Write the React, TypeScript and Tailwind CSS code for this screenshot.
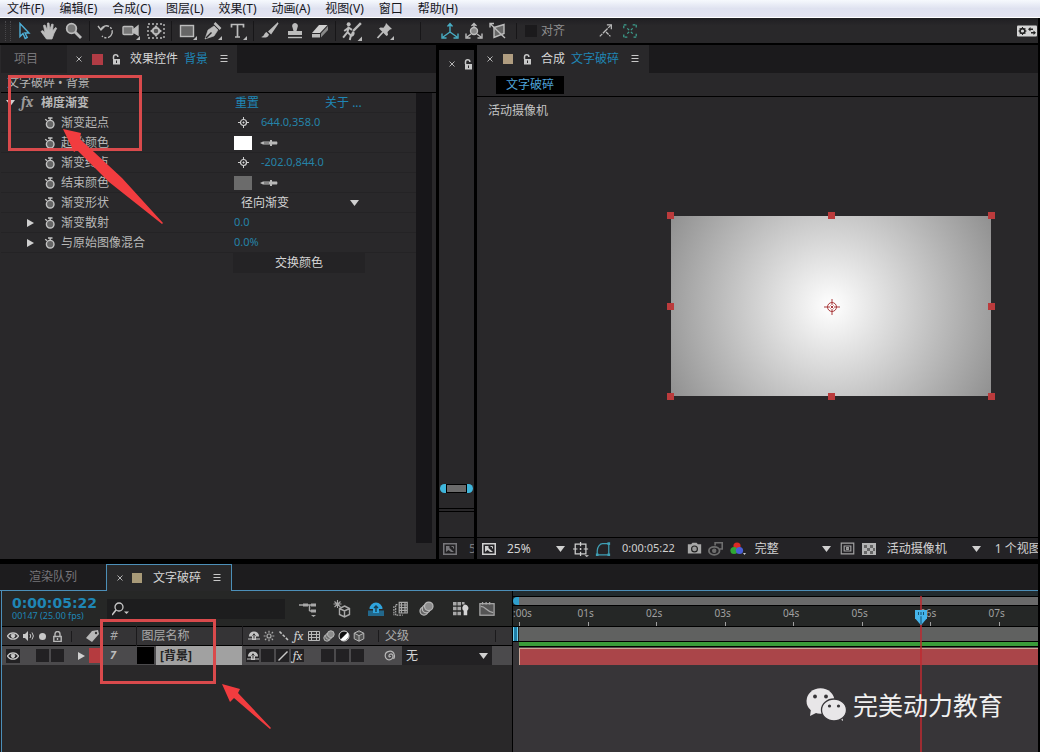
import React from 'react';
import clsx from 'clsx';

interface IconProps {
  children: React.ReactNode;
  size?: number;
  className?: string;
}

/** Stroke icon drawn on an 18x18 grid */
const Icon: React.FC<IconProps> = ({ children, size = 18, className }) => (
  <svg
    width={size}
    height={size}
    viewBox="0 0 18 18"
    fill="none"
    stroke="currentColor"
    strokeWidth={1.4}
    className={clsx('shrink-0', className)}
    aria-hidden="true"
  >
    {children}
  </svg>
);

const Corner = () => <path d="M18 14v4h-4z" fill="currentColor" stroke="none" />;

const LockIcon = () => (
  <svg width="9" height="11" viewBox="0 0 9 11" fill="none" stroke="#c8c8c8" className="shrink-0" aria-hidden="true">
    <path d="M1.500 5V3a2.200 2.200 0 0 1 4.400 0" strokeWidth="1.500" />
    <rect x="1" y="5" width="7" height="5.500" fill="#c8c8c8" stroke="none" />
    <path d="M4.500 6.500v2.500" stroke="#2a292b" />
  </svg>
);

const MenuLines = () => (
  <svg width="8" height="8" viewBox="0 0 8 8" stroke="#c8c8c8" className="shrink-0" aria-hidden="true">
    <path d="M.5.5h7M.5 3.500h7M.5 6.500h7" />
  </svg>
);

const CloseIcon = () => (
  <svg width="6" height="6" viewBox="0 0 6 6" stroke="#b4b4b4" className="shrink-0" aria-hidden="true">
    <path d="M.5.5l5 5M5.500.5l-5 5" />
  </svg>
);

const Stopwatch = () => (
  <svg width="12" height="12" viewBox="0 0 12 12" fill="none" stroke="#c4c4c4" className="shrink-0" aria-hidden="true">
    <circle cx="6.200" cy="7.200" r="3.800" fill="#666" strokeWidth="1.400" />
    <path d="M4 1h4.500M6.200 1v2.400M1.200 2.300l2 1.500" strokeWidth="1.400" />
  </svg>
);

const Triangle: React.FC<{ down?: boolean; className?: string }> = ({ down, className }) => (
  <svg width="9" height="8" viewBox="0 0 9 8" fill="#d0d0d0" className={clsx('shrink-0', className)} aria-hidden="true">
    <path d={down ? 'M0 1h9L4.500 7z' : 'M1 0v8l7-4z'} />
  </svg>
);

const Crosshair = () => (
  <svg width="11" height="11" viewBox="0 0 11 11" fill="none" stroke="#d0d0d0" className="shrink-0" aria-hidden="true">
    <circle cx="5.500" cy="5.500" r="3" strokeWidth="1.200" />
    <path d="M5.500 0v2.500M5.500 8.500v2.500M0 5.500h2.500M8.500 5.500H11M4.500 5.500h2M5.500 4.500v2" />
  </svg>
);

const Eyedropper = () => (
  <svg width="18" height="8" viewBox="0 0 18 8" className="shrink-0" aria-hidden="true">
    <path d="M0 4l3-1.500h7V1h2v1.500h5q1 1.500 0 3h-5V7h-2V5.500H3z" fill="#b8b8b8" />
    <path d="M4 4h5" stroke="#555" />
  </svg>
);

const EyeIcon = () => (
  <svg width="12" height="10" viewBox="0 0 12 10" fill="none" stroke="#c8c8c8" className="shrink-0" aria-hidden="true">
    <path d="M.5 5C3 .8 9 .8 11.500 5 9 9.200 3 9.200.5 5z" strokeWidth="1.300" />
    <circle cx="6" cy="4.800" r="1.800" fill="#c8c8c8" />
  </svg>
);

const ShyIcon = () => (
  <svg width="12" height="12" viewBox="0 0 12 12" aria-hidden="true">
    <path d="M1 6a5 4.500 0 0 1 10 0v.5H8V10H4V6.500H1z" fill="#c4c4c4" />
    <path d="M0 9h4M8 9h4" stroke="#c4c4c4" />
    <path d="M6 3.500v5M4.500 5.500L6 4l1.500 1.500" stroke="#333" fill="none" />
  </svg>
);

const SlashIcon = () => (
  <svg width="12" height="12" viewBox="0 0 12 12" aria-hidden="true">
    <path d="M1.500 10.500l9-9" stroke="#c8c8c8" strokeWidth="1.500" />
  </svg>
);

const FxText = () => <i className="font-serif text-[13px] leading-3 font-normal text-[#d0d0d0]">fx</i>;

const FilmIcon = () => (
  <svg width="12" height="12" viewBox="0 0 12 12" fill="none" stroke="#b8b8b8" aria-hidden="true">
    <path d="M.5 1.500h11v9H.5zM3.500 1v10M8.500 1v10M.5 4.500h11M.5 7.500h11" />
  </svg>
);

const BlurIcon: React.FC<{ size?: number }> = ({ size = 12 }) => (
  <svg width={size} height={size} viewBox="0 0 12 12" fill="#666" stroke="#b8b8b8" aria-hidden="true">
    <circle cx="4" cy="8" r="3.200" />
    <circle cx="5.800" cy="6.200" r="3.200" />
    <circle cx="7.800" cy="4.200" r="3.400" fill="#8c8c8c" />
  </svg>
);

const CubeIcon = () => (
  <svg width="12" height="12" viewBox="0 0 12 12" fill="#555" stroke="#b8b8b8" aria-hidden="true">
    <path d="M6 .8l4.800 2.400v5.600L6 11.200 1.200 8.800V3.200zM1.200 3.200L6 5.600l4.800-2.400M6 5.600v5.600" />
  </svg>
);

const AdjustIcon = () => (
  <svg width="12" height="12" viewBox="0 0 12 12" aria-hidden="true">
    <circle cx="6" cy="6" r="5" fill="#111" stroke="#ddd" />
    <path d="M9.500 2.500a5 5 0 0 1-7 7z" fill="#fff" />
  </svg>
);

const ViewerIcon = () => (
  <svg width="14" height="12" viewBox="0 0 14 12" fill="none" stroke="currentColor" className="shrink-0" aria-hidden="true">
    <rect x=".75" y=".75" width="12.500" height="10.500" strokeWidth="1.500" />
    <path d="M3 3h3.500v2l4.500 4H8L5.500 7 3 9z" fill="currentColor" stroke="none" />
    <path d="M8.500 3.500h2v2" />
  </svg>
);

const DropDown: React.FC<{ label: string; value: string; className?: string }> = ({ label, value, className }) => (
  <span className={clsx('relative flex items-center', className)}>
    <select aria-label={label} className="h-full w-full appearance-none bg-transparent text-[#d4d4d4] outline-none">
      <option>{value}</option>
    </select>
    <Triangle down className="pointer-events-none absolute right-0" />
  </span>
);

const menus = ['文件(F)', '编辑(E)', '合成(C)', '图层(L)', '效果(T)', '动画(A)', '视图(V)', '窗口', '帮助(H)'];

const MenuBar = () => (
  <nav className="flex h-[18px] shrink-0 items-center gap-[15px] border-b border-white bg-gradient-to-b from-[#f6f9fd] via-[#dfe2f0] to-[#e3e3f0] px-[7px]">
    {menus.map((menu) => (
      <button key={menu} className="text-xs leading-4 whitespace-nowrap text-[#16161c]">
        {menu}
      </button>
    ))}
  </nav>
);

const toolGroups: { name: string; icon: React.ReactNode }[][] = [
  [
    {
      name: '选取',
      icon: (
        <Icon className="text-[#4fb0d8]">
          <path d="M5 1.500v13l3-3 2.200 5 2-1-2.200-4.500h4z" />
        </Icon>
      ),
    },
    {
      name: '手形',
      icon: (
        <Icon>
          <path
            d="M6.500 17L1 9.500l1.500-1L5 10.500 3.500 3.500 5 3l2.200 5L7.500 1H9l.8 7 2-6 1.400.4L12.500 9l3-3.500 1.200.8L14 11.500 12 17z"
            fill="currentColor"
            strokeWidth=".8"
          />
        </Icon>
      ),
    },
    {
      name: '缩放',
      icon: (
        <Icon>
          <circle cx="6.500" cy="6.500" r="4.800" fill="#777" strokeWidth="1.800" />
          <path d="M10 10l6 6" strokeWidth="2.800" />
        </Icon>
      ),
    },
  ],
  [
    {
      name: '旋转',
      icon: (
        <Icon>
          <path d="M4 7a6 6 0 1 1 1 7" strokeDasharray="9 1.500 2 1.500" />
          <path d="M1 4l3 4 3.500-3.500" />
        </Icon>
      ),
    },
    {
      name: '摄像机',
      icon: (
        <Icon>
          <rect x="1" y="4.500" width="10" height="8" rx="1" fill="#777" />
          <path d="M11 8l5-4v9l-5-3z" fill="currentColor" />
          <Corner />
        </Icon>
      ),
    },
    {
      name: '锚点',
      icon: (
        <Icon>
          <rect x="1" y="2" width="16" height="14" strokeDasharray="2 2" />
          <circle cx="9" cy="9" r="3.200" fill="#555" strokeWidth="1.800" />
          <path d="M9 3l2 2.500H7zM9 15l2-2.500H7zM3 9l2.500-2v4zM15 9l-2.500-2v4z" fill="currentColor" stroke="none" />
        </Icon>
      ),
    },
  ],
  [
    {
      name: '矩形',
      icon: (
        <Icon>
          <rect x="1.500" y="3.500" width="13" height="11" fill="#666" />
          <Corner />
        </Icon>
      ),
    },
    {
      name: '钢笔',
      icon: (
        <Icon>
          <path d="M1 17l3-9 6-4 4 4-4 6z" fill="currentColor" strokeWidth=".6" />
          <path d="M10.500 1l6 6" strokeWidth="2.500" />
          <path d="M2 16l5.500-5.500" stroke="#262527" />
          <Corner />
        </Icon>
      ),
    },
    {
      name: '文字',
      icon: (
        <Icon>
          <path d="M2.500 5.500V2.500h12v3M8.500 2.500v12M6 15h5" strokeWidth="1.700" />
          <Corner />
        </Icon>
      ),
    },
  ],
  [
    {
      name: '画笔',
      icon: (
        <Icon>
          <path d="M17 1L8 9.500l2 2z" fill="currentColor" />
          <path d="M0 15c3 0 3-4 5.500-5L8 12.500C7 16 3 16 0 15z" fill="currentColor" stroke="none" />
        </Icon>
      ),
    },
    {
      name: '仿制图章',
      icon: (
        <Icon>
          <path
            d="M9 1a3 3 0 0 1 2.500 4.500L10.500 9H16v4H2V9h5.500L6.500 5.500A3 3 0 0 1 9 1z"
            fill="currentColor"
            stroke="none"
          />
          <path d="M2 15.500h14" />
        </Icon>
      ),
    },
    {
      name: '橡皮擦',
      icon: (
        <Icon>
          <path d="M1 11l7-8h8.500l-7.500 8z" fill="#d0d0d0" stroke="none" />
          <path d="M1 12h8v3.500H1z" fill="#bbb" stroke="none" />
          <path d="M10 11.500l7-7.500v4l-7 7.500z" fill="#888" stroke="none" />
        </Icon>
      ),
    },
  ],
  [
    {
      name: 'Roto 笔刷',
      icon: (
        <Icon size={20}>
          <circle cx="6" cy="3" r="1.800" fill="currentColor" stroke="none" />
          <path d="M6 5l-1 5-4 5M5 10l3 3-1 4M2 9l4-3 3 2" strokeWidth="1.800" />
          <path d="M17 2l-7 7" strokeWidth="2.200" />
          <path d="M7 14c1 0 1-4 3-5l1.500 1.500C11 14 9 14.500 7 14z" fill="currentColor" stroke="none" />
          <Corner />
        </Icon>
      ),
    },
    {
      name: '操控点',
      icon: (
        <Icon className="ml-3">
          <path
            d="M10 1l6 6-2 .5-2.500 2.500.5 3-1.500 1L3 6.500 4.500 5.500l3 .3L9.500 3z"
            fill="currentColor"
            stroke="none"
          />
          <path d="M7 10l-5.500 6" strokeWidth="1.800" />
          <Corner />
        </Icon>
      ),
    },
  ],
];

const ToolBar = () => (
  <div className="flex h-[25px] shrink-0 items-center bg-gradient-to-b from-[#1f1e22] to-[#29282a] to-30% text-[#bcbcbc]">
    <span className="ml-[5px] h-5 w-[6px] border-x border-dotted border-[#48474a]" />
    {toolGroups.map((group, index) => (
      <div key={index} className="flex items-center">
        {index > 0 && <span className="mx-[3px] h-5 w-px bg-[#171618]" />}
        {group.map((tool) => (
          <button key={tool.name} aria-label={tool.name} className="flex min-w-[25px] items-center justify-center">
            {tool.icon}
          </button>
        ))}
      </div>
    ))}
    <div className="ml-[26px] flex items-center gap-[6px] border-l border-[#171618] pl-[20px]">
      <button aria-label="本地轴模式">
        <Icon className="text-[#48adc4]">
          <path d="M9 2v8L2 15M9 10l7 5M6.500 4.500L9 1.500l2.500 3M1 11.500V16h4.500M17 11.500V16h-4.500" />
        </Icon>
      </button>
      <button aria-label="世界轴模式">
        <Icon>
          <circle cx="9" cy="9" r="3.500" fill="#888" />
          <path d="M9 2v4M6.500 4L9 1.500 11.500 4M6 12l-4 3M12 12l4 3M1 11.500V16h4.500M17 11.500V16h-4.500" />
        </Icon>
      </button>
      <button aria-label="视图轴模式">
        <Icon>
          <path d="M5 5.500l10-3v9l-10 4z" fill="#666" />
          <path d="M1.500 2L16 16M1 5.500V1.500h4" />
        </Icon>
      </button>
    </div>
    <label className="ml-[9px] flex items-center gap-1 border-l border-[#171618] pl-2 text-xs text-[#8e8e8e]">
      <input type="checkbox" className="size-3 appearance-none bg-[#1b1a1c]" />
      对齐
    </label>
    <button aria-label="对齐边缘" className="ml-[33px]">
      <Icon size={16}>
        <path d="M2 15l6-6 6 6M8 9l7-7" strokeDasharray="4 1" />
        <path d="M10 2h5v5" />
      </Icon>
    </button>
    <button aria-label="对齐特征" className="ml-2 text-[#3d9f8e]">
      <Icon size={16}>
        <path d="M2 6V2h4M12 2h4v4M16 12v4h-4M6 16H2v-4M6 6l2 2M12 6l-2 2M6 12l2-2M12 12l-2-2" strokeDasharray="3 1" />
      </Icon>
    </button>
    <button aria-label="同步设置" className="ml-auto">
      <svg width="21" height="12" viewBox="0 0 21 12" aria-hidden="true">
        <rect width="20" height="11" y=".5" rx="1" fill="#d6d6d6" />
        <circle cx="5.500" cy="6" r="2.400" fill="none" stroke="#222" strokeWidth="1.600" />
        <path d="M5.500 2v2M5.500 8v2M1.500 6h2M7.500 6h2M2.700 3.200l1.300 1.300M7 7.500l1.300 1.300M8.300 3.200L7 4.500M4 7.500L2.700 8.800" stroke="#222" />
        <path d="M13.500 2L11 4.200l2.500 2.200V5H16V3.500h-2.500zM16.500 5.500V7H14v1.500h2.500V10L19 7.700z" fill="#222" />
      </svg>
    </button>
  </div>
);

interface EffectRow {
  name: string;
  expandable?: boolean;
  value: React.ReactNode;
}

const effectRows: EffectRow[] = [
  {
    name: '渐变起点',
    value: (
      <>
        <Crosshair />
        <button className="ml-3">644.0,358.0</button>
      </>
    ),
  },
  {
    name: '起始颜色',
    value: (
      <>
        <button aria-label="起始颜色" className="-ml-1 mr-2 h-[14px] w-[18px] bg-white" />
        <Eyedropper />
      </>
    ),
  },
  {
    name: '渐变终点',
    value: (
      <>
        <Crosshair />
        <button className="ml-3">-202.0,844.0</button>
      </>
    ),
  },
  {
    name: '结束颜色',
    value: (
      <>
        <button aria-label="结束颜色" className="-ml-1 mr-2 h-[14px] w-[18px] bg-[#6b6b6b]" />
        <Eyedropper />
      </>
    ),
  },
  { name: '渐变形状', value: <DropDown label="渐变形状" value="径向渐变" className="h-5 w-[121px] pl-[3px] text-xs" /> },
  { name: '渐变散射', expandable: true, value: <button className="-ml-1">0.0</button> },
  { name: '与原始图像混合', expandable: true, value: <button className="-ml-1">0.0%</button> },
];

const EffectControls = () => (
  <section className="flex w-[42%] shrink-0 flex-col bg-[#29282a] pl-px">
    <div className="flex h-7 shrink-0 bg-[#1b1a1c] text-xs">
      <button className="w-[66px] bg-[#222123] pr-4 text-center text-[#77767a]">项目</button>
      <div className="flex items-center bg-[#29282a] px-[9px] text-[#d6d6d6]">
        <CloseIcon />
        <span className="ml-[10px] size-[11px] bg-[#b13c45]" />
        <span className="mr-[9px] ml-[9px]">
          <LockIcon />
        </span>
        效果控件<span className="mr-3 ml-[6px] text-[#1f86b5]">背景</span>
        <MenuLines />
      </div>
    </div>
    <div className="flex h-5 shrink-0 items-center border-b border-black px-[6px] text-xs text-[#b4b4b4]">文字破碎 • 背景</div>
    <div className="flex flex-1">
      <div className="flex-1">
        <div className="flex h-5 items-center border-b border-[#242325] pl-[5px] text-xs">
          <Triangle down />
          <i className="ml-[6px] w-5 font-serif text-[15px] font-bold text-[#9b9b9b]">fx</i>
          <span className="w-[194px] font-bold text-[#b8b8b8]">梯度渐变</span>
          <button className="text-[#1f86b5]">重置</button>
          <button className="ml-[66px] text-[#1f86b5]">关于 ...</button>
        </div>
        {effectRows.map((row) => (
          <div key={row.name} className="flex h-5 items-center border-b border-[#242325]">
            <div className="flex w-[237px] items-center pl-[25px] text-xs text-[#b8b8b8]">
              <span className="w-[18px]">{row.expandable && <Triangle />}</span>
              <Stopwatch />
              <span className="ml-[5px]">{row.name}</span>
            </div>
            <div className="flex items-center text-[11px] text-[#2583a8]">{row.value}</div>
          </div>
        ))}
        <button className="ml-[232px] block h-5 w-[132px] bg-[#242325] text-xs text-[#d4d4d4]">交换颜色</button>
      </div>
      <div className="mr-1 mb-4 w-4 bg-[#171619]" />
    </div>
  </section>
);

const SidePanel = () => (
  <section className="mt-[5px] flex w-[35px] shrink-0 flex-col overflow-hidden bg-[#29282a]">
    <div className="flex h-7 shrink-0 items-center gap-[9px] pl-[10px]">
      <CloseIcon />
      <LockIcon />
    </div>
    <div className="mt-auto flex h-[10px] items-center px-px">
      <span className="h-[9px] w-[6px] rounded-l-full bg-[#3fb6dc]" />
      <span className="h-[9px] flex-1 border border-black bg-[#6b6b6b]" />
      <span className="h-[9px] w-[6px] rounded-r-full bg-[#3fb6dc]" />
    </div>
    <div className="mt-[15px] h-1 shrink-0 border-y border-black" />
    <div className="mt-[25px] flex h-[22px] shrink-0 items-center gap-3 border-t border-black bg-[#222123] pl-1 text-xs text-[#77767a]">
      <ViewerIcon />5
    </div>
  </section>
);

const handlePositions = [
  '-left-1 -top-1',
  'left-1/2 -ml-[3px] -top-1',
  '-right-1 -top-1',
  '-left-1 top-1/2 -mt-[3px]',
  '-right-1 top-1/2 -mt-[3px]',
  '-left-1 -bottom-1',
  'left-1/2 -ml-[3px] -bottom-1',
  '-right-1 -bottom-1',
];

const CompositionViewer = () => (
  <section className="flex min-w-0 flex-1 flex-col overflow-hidden bg-[#29282a]">
    <div className="flex h-7 shrink-0 bg-[#1b1a1c] text-xs">
      <div className="flex items-center bg-[#29282a] px-[10px] text-[#d6d6d6]">
        <CloseIcon />
        <span className="ml-[10px] size-[10px] bg-[#b09d80]" />
        <span className="mr-[9px] ml-[10px]">
          <LockIcon />
        </span>
        合成<span className="mr-3 ml-[6px] text-[#1f86b5]">文字破碎</span>
        <MenuLines />
      </div>
    </div>
    <div className="flex h-6 shrink-0 items-center border-b border-black pl-[19px]">
      <button className="h-[18px] bg-black px-[10px] text-xs text-[#4fa3d8]">文字破碎</button>
    </div>
    <div className="flex min-h-0 flex-1 flex-col">
      <p className="px-[11px] pt-[6px] text-xs leading-4 text-[#c4c4c4]">活动摄像机</p>
      <div className="flex justify-end pt-[97px] pr-[47px]">
        <div className="relative h-[180px] w-[320px] bg-[radial-gradient(circle_244px_at_50%_50%,#ffffff,#6b6b6b)]">
          {handlePositions.map((position) => (
            <span key={position} className={clsx('absolute size-[7px] bg-[#bb3b3c]', position)} />
          ))}
          <svg
            width="16"
            height="16"
            viewBox="0 0 16 16"
            fill="none"
            stroke="#a8383a"
            className="absolute top-1/2 left-1/2 -mt-[7px] -ml-[7px]"
            aria-hidden="true"
          >
            <circle cx="8" cy="8" r="4.500" />
            <path d="M8 0v6M8 10v6M0 8h6M10 8h6M6.500 6.500l3 3M9.500 6.500l-3 3" />
          </svg>
        </div>
      </div>
    </div>
    <div className="flex h-[22px] shrink-0 items-center border-t border-black bg-[#242326] pl-[5px] text-xs whitespace-nowrap text-[#d0d0d0]">
      <ViewerIcon />
      <DropDown label="放大率" value="25%" className="ml-[11px] w-[58px] shrink-0" />
      <button aria-label="网格和参考线" className="ml-2">
        <Icon size={16}>
          <rect x="2.500" y="3.500" width="12" height="11" />
          <path d="M8.500 1v5M8.500 12v5M0 9h5M12 9h5M8.500 8v2M7.500 9h2" />
          <path d="M13 16h5l-2.500 2z" fill="currentColor" stroke="none" />
        </Icon>
      </button>
      <button aria-label="蒙版可见性" className="ml-[6px] text-[#3f9fb5]">
        <Icon size={16}>
          <path d="M2.500 15.500V11c0-4 3-8 6-8h7v12.500z" />
          <path d="M1 14h3v3H1zM14 14h3v3h-3zM14 1.500h3v3h-3z" fill="currentColor" stroke="none" />
        </Icon>
      </button>
      <button className="ml-[11px] text-[11px]">0:00:05:22</button>
      <button aria-label="拍摄快照" className="ml-3 text-[#a8a8a8]">
        <Icon size={15}>
          <path d="M1 4h4l1.500-2h5L13 4h4v11H1z" fill="currentColor" stroke="none" />
          <circle cx="9" cy="9.500" r="3.500" fill="#999" stroke="#222" />
        </Icon>
      </button>
      <button aria-label="显示快照" className="ml-[6px] text-[#6e6e6e]">
        <Icon size={16}>
          <ellipse cx="7" cy="11" rx="6" ry="4.500" strokeWidth="2" />
          <circle cx="7" cy="11" r="1.800" fill="currentColor" />
          <path d="M8 5V2h8v7h-3" strokeWidth="1.800" />
        </Icon>
      </button>
      <button aria-label="通道" className="ml-[6px]">
        <svg width="16" height="14" viewBox="0 0 16 14" aria-hidden="true">
          <circle cx="7" cy="4" r="3.600" fill="#dc2a25" />
          <circle cx="4" cy="8.500" r="3.600" fill="#2fa836" />
          <circle cx="9.500" cy="8.500" r="3.600" fill="#4a5fd8" />
          <path d="M13 11h3l-1.500 2z" fill="#ccc" />
        </svg>
      </button>
      <DropDown label="分辨率" value="完整" className="ml-[9px] w-[76px] shrink-0" />
      <button aria-label="目标区域" className="ml-[9px] text-[#a4a4a4]">
        <Icon size={15}>
          <path d="M1.500 2.500h15v13h-15zM5 6h8v6H5zM8 8h2v2H8z" />
        </Icon>
      </button>
      <button aria-label="透明网格" className="ml-[7px]">
        <svg width="14" height="12" viewBox="0 0 14 12" aria-hidden="true">
          <path d="M0 0h14v12H0z" fill="#b4b4b4" />
          <path d="M2 2h3v3H2zM8 2h3v3H8zM5 5h3v3H5zM11 5h2v3h-2zM2 8h3v3H2zM8 8h3v3H8z" fill="#666" />
        </svg>
      </button>
      <DropDown label="3D 视图" value="活动摄像机" className="ml-[11px] w-[94px] shrink-0" />
      <button className="ml-[14px]">1 个视图</button>
    </div>
  </section>
);

const switchHeads = [
  <ShyIcon />,
  <Icon size={12}>
    <circle cx="9" cy="9" r="3" strokeWidth="1.800" />
    <path d="M9 1v3M9 14v3M1 9h3M14 9h3M3 3l2 2M13 13l2 2M15 3l-2 2M3 15l2-2" strokeWidth="1.800" />
  </Icon>,
  <svg width="12" height="12" viewBox="0 0 12 12" aria-hidden="true">
    <path d="M1.500 1.500l9 9" stroke="#c4c4c4" strokeWidth="1.500" strokeDasharray="3 1.500" />
  </svg>,
  <FxText />,
  <FilmIcon />,
  <BlurIcon />,
  <AdjustIcon />,
  <CubeIcon />,
];

const layerSwitches: (React.ReactNode | null)[] = [
  <ShyIcon />,
  <span />,
  <SlashIcon />,
  <FxText />,
  null,
  <span />,
  <span />,
  <span />,
];

const LayerTable = () => (
  <table className="w-full table-fixed border-collapse text-xs">
    <colgroup>
      <col className="w-[70px]" />
      <col className="w-[31px]" />
      <col className="w-[33px]" />
      <col className="w-[106px]" />
      <col className="w-[137px]" />
      <col />
    </colgroup>
    <thead>
      <tr className="h-[19px] border-y border-black bg-[#353436] text-left text-[#aaa]">
        <th className="p-0">
          <div className="flex items-center gap-1 border-r border-[#1b1a1c] pl-[5px]">
            <EyeIcon />
            <svg width="12" height="10" viewBox="0 0 12 10" fill="#c8c8c8" stroke="#c8c8c8" aria-hidden="true">
              <path d="M0 3h2l3-3v10L2 7H0z" stroke="none" />
              <path d="M7 3q1.500 2 0 4M9 1.500q2.800 3.500 0 7" fill="none" />
            </svg>
            <span className="size-[7px] rounded-full bg-[#c8c8c8]" />
            <svg width="9" height="11" viewBox="0 0 9 11" fill="none" stroke="#b8b8b8" className="ml-[3px]" aria-hidden="true">
              <path d="M2 5V3a2.500 2.500 0 0 1 5 0v2" strokeWidth="1.400" />
              <path d="M.8 5.500h7.400v5H.8zM4.500 7v2" strokeWidth="1.400" />
            </svg>
          </div>
        </th>
        <th className="p-0">
          <svg width="13" height="12" viewBox="0 0 13 12" className="ml-[14px]" aria-hidden="true">
            <path d="M0 8l6-7 6-1 1 4-7 8z" fill="#b8b8b8" />
            <circle cx="10" cy="3" r="1.200" fill="#333" />
          </svg>
        </th>
        <th className="p-0 pl-[7px] leading-4 font-normal italic">#</th>
        <th className="border-x border-[#1b1a1c] p-0 pl-[5px] leading-4 font-normal">图层名称</th>
        <th className="p-0">
          <div className="flex gap-[3px] border-r border-[#1b1a1c] pl-[5px]">
            {switchHeads.map((head, index) => (
              <span key={index} className="flex size-3 items-center justify-center">
                {head}
              </span>
            ))}
          </div>
        </th>
        <th className="p-0 font-normal">
          <div className="mr-4 border-r border-[#1b1a1c] pl-[6px] leading-3">父级</div>
        </th>
      </tr>
    </thead>
    <tbody>
      <tr className="h-[19px] bg-[#4b4a4c]">
        <td className="p-0">
          <div className="flex items-center gap-[2px] pl-1">
            <button aria-label="可见" className="mr-[14px] flex size-[14px] items-center justify-center bg-[#222123]">
              <EyeIcon />
            </button>
            <button aria-label="独奏" className="size-[13px] bg-[#222123]" />
            <button aria-label="锁定" className="size-[13px] bg-[#222123]" />
          </div>
        </td>
        <td className="p-0">
          <div className="flex items-center justify-end gap-[3px]">
            <Triangle />
            <span className="h-[15px] w-[14px] bg-[#b53b3f]" />
          </div>
        </td>
        <td className="p-0 pl-[7px] text-[11px] font-bold text-[#bcbcbc] italic">7</td>
        <td className="p-0">
          <div className="flex h-[19px] gap-[2px] pl-px">
            <span className="h-[17px] w-[17px] self-center bg-black" />
            <span className="flex flex-1 items-center bg-[#a1a1a1] pl-1 font-bold text-[#222]">[背景]</span>
          </div>
        </td>
        <td className="p-0">
          <div className="flex gap-[2px] pl-1">
            {layerSwitches.map((item, index) =>
              item ? (
                <button
                  key={index}
                  aria-label={`开关 ${index + 1}`}
                  className="flex size-[13px] items-center justify-center bg-[#222123]"
                >
                  {item}
                </button>
              ) : (
                <span key={index} className="size-[13px]" />
              ),
            )}
          </div>
        </td>
        <td className="p-0">
          <div className="flex items-center gap-[6px] pl-[5px]">
            <svg width="12" height="12" viewBox="0 0 12 12" fill="none" stroke="#b8b8b8" strokeWidth="1.200" aria-hidden="true">
              <path d="M6.500 6a.8.8 0 0 1-1.500.4A2 2 0 0 1 8.300 4.500a3.200 3.200 0 0 1-1.500 5A4 4 0 0 1 1.200 6a4.600 4.600 0 0 1 9-1.500A5 5 0 0 1 9.500 9" />
            </svg>
            <div className="mr-5 flex-1 bg-[#222123] px-1">
              <DropDown label="父级" value="无" className="h-[19px] w-full" />
            </div>
          </div>
        </td>
      </tr>
    </tbody>
  </table>
);

const LayerHeader = () => (
  <div className="flex h-[35px] shrink-0 items-center bg-[#262726] text-[#a8a8a8]">
    <div className="w-[105px] pl-[10px] text-[#1f86b5]">
      <div className="font-['DejaVu_Sans','Noto_Sans',sans-serif] text-[14px] leading-[14px] font-bold">0:00:05:22</div>
      <div className="text-[9px] leading-3 whitespace-nowrap">00147 (25.00 fps)</div>
    </div>
    <label className="flex h-5 w-[178px] items-center bg-[#1d1d1e] pl-[5px]">
      <svg width="18" height="14" viewBox="0 0 18 14" fill="none" stroke="#c8c8c8" className="shrink-0" aria-hidden="true">
        <circle cx="7" cy="5" r="4" strokeWidth="1.300" />
        <path d="M4 8l-4 5" strokeWidth="1.600" />
        <path d="M12 9.500h5L14.500 12z" fill="#c8c8c8" stroke="none" />
      </svg>
      <input aria-label="搜索图层" className="w-full bg-transparent outline-none" />
    </label>
    <div className="flex flex-1 items-center pl-[14px]">
      <button aria-label="合成微型流程图" className="w-[34px]">
        <Icon>
          <path d="M0 5h8M9 5h6M10.500 5v6M10.500 11h4" />
          <path d="M4 3.500h5v3H4zM12 3.500h5v3h-5zM12 9.500h5v3h-5zM12 15h5l-2.500 2z" fill="currentColor" stroke="none" />
        </Icon>
      </button>
      <button aria-label="草图 3D" className="w-[34px]">
        <Icon>
          <path d="M11.500 6l5 2.500v6l-5 2.500-5-2.500v-6zM6.500 8.500l5 2.500 5-2.500M11.500 11v6" />
          <path d="M4.500 0v8M.5 4h8M1.500 1.500l6 5.500M7.500 1.500l-6 5.500" strokeWidth="1.100" />
        </Icon>
      </button>
      <button aria-label="隐藏消隐图层" className="w-[26px] text-[#2fa3dc]">
        <Icon>
          <path d="M1 10.500h5v2h6v-2h5V16H1z" fill="#22688c" stroke="none" />
          <path d="M2.500 9a6.500 6.500 0 0 1 13 0H12v4H6V9z" fill="currentColor" stroke="none" />
          <path d="M9 6v6M7 8l2-2 2 2" stroke="#173b4d" />
        </Icon>
      </button>
      <button aria-label="帧混合" className="w-[26px]">
        <Icon size={16}>
          <path d="M7 1.500h9v12H7zM9.500 1v13M13.500 1v13M7 4.500h9M7 7.500h9M7 10.500h9" />
          <path d="M5 4H3v12h8M1 6v10" strokeDasharray="2 1" />
        </Icon>
      </button>
      <button aria-label="运动模糊" className="w-[34px]">
        <BlurIcon size={15} />
      </button>
      <button aria-label="变化" className="w-[26px]">
        <Icon size={16}>
          <path
            d="M0 1h4v4H0zM5 1h4v4H5zM10 1h3v3h-3zM0 6.500h4v4H0zM5 6.500h4v4H5zM0 12h4v4H0zM5 12h4v4H5z"
            fill="currentColor"
            stroke="none"
          />
          <path d="M13.500 4a4 4 0 0 1 2.500 7v5h-4v-5a4 4 0 0 1 1.500-7z" fill="#d4d4d4" stroke="none" />
        </Icon>
      </button>
      <button aria-label="图表编辑器">
        <Icon size={16}>
          <rect x="1" y="3" width="16" height="13" fill="#555" />
          <path d="M2 6c6 0 6 6 14 7M4 1v3M8 1v3M12 1v3" />
        </Icon>
      </button>
    </div>
  </div>
);

const seconds = [':00s', '01s', '02s', '03s', '04s', '05s', '06s', '07s'];

const TimeRuler = () => (
  <div className="relative flex min-w-0 flex-1 flex-col overflow-hidden border-l border-black bg-[#373538]">
    <div className="h-[5px] shrink-0 bg-[#222b2e]" />
    <div className="flex h-[10px] shrink-0 border-y border-black bg-[#222322]">
      <span className="w-[6px] rounded-l-full bg-[#2f9fcc]" />
      <span className="flex-1 bg-[#6a6a6a]" />
    </div>
    <div className="flex h-5 shrink-0 bg-[#252726] pl-[6px] text-[10px] text-[#a0a0a0]">
      {seconds.map((second, index) => (
        <div key={second} className="flex w-[13.2%] shrink-0 flex-col justify-between">
          <span className={clsx('leading-[14px]', index === 0 ? '-ml-[6px]' : '-ml-[10px]')}>{second}</span>
          <span className="h-1 w-px bg-[#a0a0a0]" />
        </div>
      ))}
    </div>
    <div className="flex h-4 shrink-0 border-y border-black bg-[#222322]">
      <span className="w-[5px] border-x border-[#6fd0f0] bg-[#1f7fa8]" />
      <span className="ml-px flex-1 bg-[#606160]" />
    </div>
    <div className="ml-[6px] h-[5px] shrink-0 border-b border-black bg-[#3a9c3a]" />
    <div className="ml-[6px] h-[18px] shrink-0 bg-[#4a4a44] pt-px">
      <div className="h-[17px] border-t border-l border-[#c9a597] bg-[#aa4549]" />
    </div>
    <div className="absolute top-[5px] bottom-0 left-[77%] -ml-[2px]">
      <svg width="12" height="155" viewBox="0 0 12 155" preserveAspectRatio="xMidYMin slice" className="h-full" aria-hidden="true">
        <path d="M6 0v1000" stroke="#c02a30" strokeWidth="1.500" />
        <path d="M0 14h12v8l-6 7-6-7z" fill="#45b4ea" />
        <path d="M3.500 16v3M6 16v3M8.500 16v3M6 20v8" stroke="#15506e" />
      </svg>
    </div>
    <div className="absolute right-[35px] bottom-[29px] flex items-center gap-[6px] text-[25px] leading-9 text-[#f0f0f0]">
      <svg width="41" height="36" viewBox="0 0 41 36" aria-hidden="true">
        <path d="M5 22l-1 7 8-4z" fill="#e8e6e8" />
        <ellipse cx="14.500" cy="14" rx="14" ry="12.800" fill="#e8e6e8" />
        <path d="M31 30l6 4-1-7z" fill="#e8e6e8" />
        <ellipse cx="28" cy="23" rx="12.500" ry="11" fill="#e8e6e8" stroke="#373538" strokeWidth="1.300" />
        <g fill="#373538">
          <circle cx="9" cy="9.500" r="1.900" />
          <circle cx="20" cy="9.500" r="1.900" />
          <circle cx="23.500" cy="19" r="1.600" />
          <circle cx="32.500" cy="19" r="1.600" />
        </g>
      </svg>
      完美动力教育
    </div>
  </div>
);

const Timeline = () => (
  <section className="flex h-[25vh] min-h-[180px] shrink-0 flex-col overflow-hidden bg-[#1d1c1e]">
    <div className="flex h-[27px] shrink-0 text-xs">
      <button className="w-[106px] border-b border-[#4c8fb8] text-[#77767a]">渲染队列</button>
      <div className="flex items-center border-x border-t border-[#4c8fb8] bg-[#282829] px-[10px] text-[#d6d6d6]">
        <CloseIcon />
        <span className="mr-[11px] ml-[9px] size-[10px] bg-[#a89a78]" />
        文字破碎
        <span className="ml-3">
          <MenuLines />
        </span>
      </div>
      <div className="flex-1 border-b border-[#4c8fb8]" />
    </div>
    <div className="ml-px flex min-h-0 flex-1 border-l border-[#4c8fb8]">
      <div className="w-[510px] shrink-0 bg-[#292829]">
        <LayerHeader />
        <LayerTable />
      </div>
      <TimeRuler />
    </div>
  </section>
);

export default function App() {
  return (
    <div className="relative flex h-screen flex-col overflow-hidden bg-black font-['Noto_Sans','Noto_Sans_CJK_SC',sans-serif]">
      <MenuBar />
      <div className="flex min-h-0 flex-1 flex-col pr-[2px]">
        <ToolBar />
        <main className="flex min-h-0 flex-1 gap-[3px] pt-[2px] pb-[5px]">
          <EffectControls />
          <SidePanel />
          <CompositionViewer />
        </main>
        <Timeline />
      </div>

      {/* Highlight marks over the panels */}
      <div className="pointer-events-none absolute top-[75px] left-2 h-[76px] w-[134px] border-[3px] border-[#d94a4c]" />
      <svg
        width="101"
        height="95"
        viewBox="0 0 101 95"
        className="pointer-events-none absolute top-[129px] left-[63px]"
        aria-hidden="true"
      >
        <path d="M0 0l18 4-1 6 42 39 41 45-1 1-53-42-32-32-3 2z" fill="#f23c3f" />
      </svg>
      <div className="pointer-events-none absolute bottom-[68px] left-[100px] h-[65px] w-[116px] border-[3px] border-[#d94a4c]" />
      <svg
        width="49"
        height="46"
        viewBox="0 0 49 46"
        className="pointer-events-none absolute bottom-[22px] left-[222px]"
        aria-hidden="true"
      >
        <path d="M0 0l18 5-2 4 33 35-1 1L12 14l-4 4z" fill="#f23c3f" />
      </svg>
    </div>
  );
}
